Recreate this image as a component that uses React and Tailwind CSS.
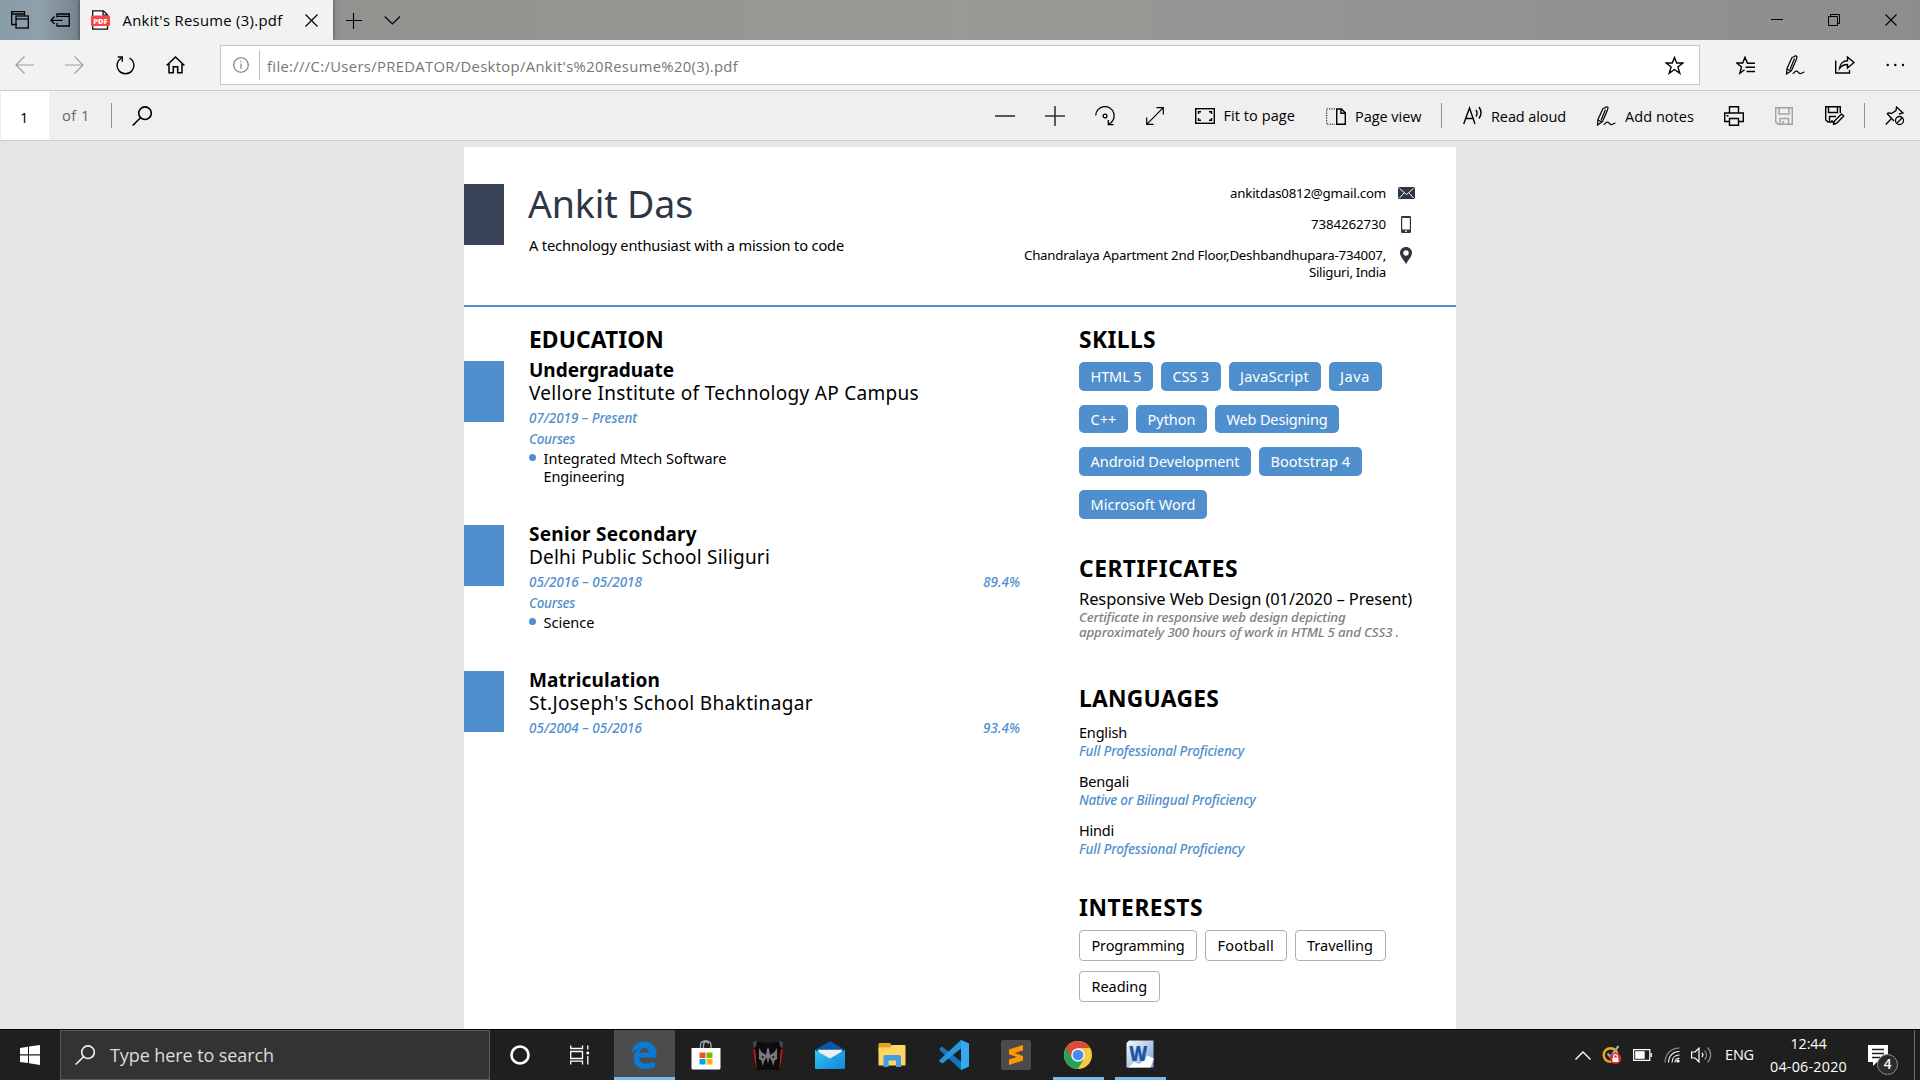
import { useLayoutEffect, useRef } from "react";

/* Single line of text tracked so that it fills exactly `w` pixels. */
function Fit({ w, className = "", children }) {
  const ref = useRef(null);
  useLayoutEffect(() => {
    const el = ref.current;
    el.style.letterSpacing = "0px";
    const natural = el.getBoundingClientRect().width;
    el.style.letterSpacing = (w - natural) / el.textContent.length + "px";
  }, [w, children]);
  return (
    <span className={`block w-fit shrink-0 whitespace-pre ${className}`}>
      <span ref={ref} className="inline-block">{children}</span>
    </span>
  );
}

function Ico({ w = 20, h = 20, sw = 1.3, className = "", children }) {
  return (
    <svg
      width={w}
      height={h}
      viewBox={`0 0 ${w} ${h}`}
      fill="none"
      stroke="currentColor"
      strokeWidth={sw}
      className={`block shrink-0 ${className}`}
    >
      {children}
    </svg>
  );
}

const PenIcon = ({ className }) => (
  <Ico className={className} sw={1.2}>
    <path d="M8.500 2 L10.500 0.800 L12 1.500 L11.500 4 L6.500 15.500 L1.500 19 L2 13.500 L7 2.500 Z M9.500 3.500 L5 14.500 M2 14 L5.500 16" />
    <path d="M7.500 18.500 C9.500 18.500 9.500 15.500 12 16.200 C14 17 13.500 19 16 18.500 C17.500 18 18 17 19.500 17" />
  </Ico>
);

const MagnifierIcon = ({ className }) => (
  <Ico className={className} sw={1.6}>
    <circle cx="13" cy="7.200" r="6.300" />
    <path d="M8.500 11.700 L0.700 19.500" />
  </Ico>
);

function TitleBar() {
  return (
    <div className="flex h-10 items-center bg-linear-to-r from-[#8e8e8c] via-[#999996] to-[#8d8d8d] text-black">
      <div className="flex h-10 w-20 items-center bg-linear-to-r from-[#8a9ba8] via-[#8fa0ab] to-[#76838d]">
        <Ico w={18} h={18} className="ml-[11px]">
          <path d="M5.500 13.500 H0.700 V0.700 H13.500 V4.500 M0.700 3 H13.500" />
          <rect x="5" y="5" width="12.300" height="12" />
          <path d="M5 8 H17.300" />
        </Ico>
        <Ico w={20} h={14} className="ml-[21px]">
          <path d="M7 4.500 V1 H19.300 V13 H7 V10 M7 3.300 H19.300" />
          <path d="M12.500 7.300 H1 M4.500 3.500 L0.900 7.300 L4.500 11" />
        </Ico>
      </div>
      <div className="flex h-10 w-[253px] items-center bg-[#f2f2f2] shadow-[0_0_4px_rgba(0,0,0,0.55)]">
        <Ico w={19} h={20} className="ml-[11px]">
          <path d="M1.700 7 V0.800 H12.500 L16.500 4.800 V19.200 H1.700 V16 M12 1 V5.200 H16.500" fill="#fff" stroke="#111" />
          <rect x="0" y="5.500" width="19" height="10.500" rx="1" fill="#fb4447" stroke="none" />
          <text x="9.500" y="13.500" textAnchor="middle" fontSize="7.500" fontWeight="800" fontFamily="Open Sans" fill="#fff" stroke="none">PDF</text>
        </Ico>
        <Fit w={160} className="ml-[12.500px] text-[14.8px] leading-5">Ankit's Resume (3).pdf</Fit>
        <Ico w={13} h={13} className="ml-[22.500px]" sw={1.2}>
          <path d="M0.500 0.500 L12.500 12.500 M12.500 0.500 L0.500 12.500" />
        </Ico>
      </div>
      <Ico w={16} h={16} className="mt-[2px] ml-[13px]" sw={1.1}>
        <path d="M0 7.500 H16 M7.500 0 V16" />
      </Ico>
      <Ico w={17} h={9} className="ml-[22px]" sw={1.2}>
        <path d="M0.700 0.500 L8.400 8 L16 0.500" />
      </Ico>
      <Ico w={12} h={12} className="ml-auto" sw={1}>
        <path d="M0 5.500 H12" />
      </Ico>
      <Ico w={12} h={12} className="ml-[45px]" sw={1}>
        <path d="M0.500 2.500 H9.500 V11.500 H0.500 Z M2.500 2.500 V0.500 H11.500 V9.500 H9.500" />
      </Ico>
      <Ico w={12} h={12} className="mr-[23px] ml-[45px]" sw={1.1}>
        <path d="M0.500 0.500 L11.500 11.500 M11.500 0.500 L0.500 11.500" />
      </Ico>
    </div>
  );
}

function AddressRow() {
  return (
    <div className="flex h-[50px] items-center bg-[#f2f2f2] text-black">
      <Ico w={19} h={18} className="ml-[15px] text-[#a0a0a0]" sw={1.2}>
        <path d="M19 9 H1 M9.500 0.500 L1 9 L9.500 17.500" />
      </Ico>
      <Ico w={19} h={18} className="ml-[31px] text-[#a0a0a0]" sw={1.2}>
        <path d="M0 9 H18 M9.500 0.500 L18 9 L9.500 17.500" />
      </Ico>
      <Ico w={19} h={19} className="ml-[32px]" sw={1.4}>
        <path d="M13.500 2 A8.400 8.400 0 1 1 5.500 2" />
        <path d="M1.800 1 H6.300 V5.800" />
      </Ico>
      <Ico w={19} h={18} className="ml-[31px]" sw={1.5}>
        <path d="M0.600 9.500 L9.500 1 L18.400 9.500 M3 8 V16.800 H7.300 V10.800 H11.700 V16.800 H16 V8" />
      </Ico>
      <div className="ml-[35px] flex h-10 w-[1480px] items-center border border-[#c6c6c6] bg-white">
        <Ico w={16} h={16} className="ml-[12px] text-[#767676]" sw={1.1}>
          <circle cx="8" cy="8" r="7.300" />
          <path d="M8 6.500 V12 M8 4 V5.300" />
        </Ico>
        <div className="ml-[10px] h-[30px] w-px bg-[#bdbdbd]" />
        <Fit w={471} className="mt-px ml-[7px] text-[14.8px] leading-5 text-[#767676]">
          file:///C:/Users/PREDATOR/Desktop/Ankit's%20Resume%20(3).pdf
        </Fit>
        <Ico w={19} h={19} className="mr-[15px] ml-auto" sw={1.4}>
          <path d="M9.500 1.500 L11.700 7 H18 L12.900 10.900 L14.800 17.300 L9.500 13.500 L4.200 17.300 L6.100 10.900 L1 7 H7.300 Z" />
        </Ico>
      </div>
      <Ico w={19} h={19} className="ml-[36px]" sw={1.4}>
        <path d="M19 7.200 H11.500 L9 1.200 L6.700 7 H0.800 L5.500 10.900 L3.800 17.300 L8.500 13.800 M9.500 11.200 H19 M10.500 15.500 H19" />
      </Ico>
      <PenIcon className="ml-[30px]" />
      <Ico w={20} h={18} className="ml-[30px]" sw={1.4}>
        <path d="M0.700 4.500 V17 H14.500 V14" />
        <path d="M4.500 12.500 C5 8 8 4.700 12.500 4.700 V1 L19 6.500 L12.500 12 V8.500 C9 8.500 6.500 9.800 4.500 12.500 Z" />
      </Ico>
      <Ico w={19} h={4} className="ml-[31px]">
        <g fill="currentColor" stroke="none">
          <circle cx="1.700" cy="2" r="1.200" />
          <circle cx="9.300" cy="2" r="1.200" />
          <circle cx="17" cy="2" r="1.200" />
        </g>
      </Ico>
    </div>
  );
}

function PdfToolbar() {
  return (
    <div className="flex h-[51px] items-center border-y border-[#cbcbcb] bg-[#efefef] text-black">
      <div className="ml-px flex h-[49px] w-12 items-center bg-white pt-[4px] pl-[19px] text-[14.5px]">1</div>
      <Fit w={28} className="-mt-px ml-[13px] text-[14.8px] leading-5 text-[#666]">of 1</Fit>
      <div className="ml-[21px] h-[25px] w-px bg-[#8f8f8f]" />
      <MagnifierIcon className="ml-[20px]" />
      <Ico className="ml-[843px] text-[#333]" sw={1.6}>
        <path d="M0 10 H20" />
      </Ico>
      <Ico className="ml-[30px] text-[#333]" sw={1.6}>
        <path d="M0 10 H20 M10 0 V20" />
      </Ico>
      <Ico className="ml-[30px]" sw={1.3}>
        <path d="M0.700 9.500 A9.200 9.200 0 1 1 14 18 M13.300 14 V18.700 H18.500" />
        <circle cx="10" cy="10" r="1.900" />
      </Ico>
      <Ico w={18} h={18} className="ml-[31px]" sw={1.2}>
        <path d="M0.700 17.300 L17.300 0.700 M10.500 0.700 H17.300 V7.500 M0.700 10.500 V17.300 H7.500" />
      </Ico>
      <Ico w={20} h={16} className="ml-[31px]" sw={1.4}>
        <rect x="0.700" y="0.700" width="18.600" height="14.600" />
        <path d="M3.500 6 V3.700 H6 M14 3.700 H16.500 V6 M3.500 10 V12.300 H6 M14 12.300 H16.500 V10" />
      </Ico>
      <Fit w={71.500} className="ml-[8.500px] text-[14.500px] leading-5">Fit to page</Fit>
      <Ico w={20} h={17} className="mt-[2px] ml-[31px]" sw={1.400}>
        <path d="M10.700 1 H15.500 L19.300 4.800 V16.300 H10.700 Z M15 1 V5.300 H19.300" />
        <path d="M9 0.900 H0.700 V16.200 H9" strokeDasharray="1.200 1.200" strokeWidth="1" />
      </Ico>
      <Fit w={66.500} className="mt-[2px] ml-[9px] text-[14.500px] leading-5">Page view</Fit>
      <div className="ml-[19.500px] h-[25px] w-px bg-[#8f8f8f]" />
      <Ico w={20} h={19} className="ml-[21px]" sw={1.4}>
        <path d="M0.700 18 L6.500 2 L12 18 M2.800 12.500 H10" />
        <path d="M13 4 A6 6 0 0 1 13 10.500 M16 1 A10 10 0 0 1 16 12.500" />
      </Ico>
      <Fit w={75} className="mt-[2px] ml-[8px] text-[14.500px] leading-5">Read aloud</Fit>
      <PenIcon className="ml-[30px]" />
      <Fit w={69} className="mt-[2px] ml-[9px] text-[14.500px] leading-5">Add notes</Fit>
      <Ico className="ml-[30px]" sw={1.4}>
        <path d="M5.500 7 V0.700 H14.500 V7 M5 15.500 H0.700 V7 H19.300 V15.500 H15" />
        <path d="M5.500 12.500 H14.500 V19.300 H5.500 Z M2.500 9.700 H4.500" />
      </Ico>
      <Ico w={18} h={18} className="ml-[31px] text-[#a3a3a3]" sw={1.5}>
        <path d="M0.700 0.700 H17.300 V17.300 H3 L0.700 15 Z M4 0.700 V7 H14 V0.700 M5 17 V11.500 H13.500 V17 M8 17 V14" />
      </Ico>
      <Ico w={20} h={19} className="ml-[32px]" sw={1.4}>
        <path d="M9 16 H3 L0.700 14 V0.700 H15.300 V7 M3.500 0.700 V6.500 H12.500 V0.700 M4.500 16 V10.500 H11" />
        <path d="M8.500 18.500 L9.500 15 L16.500 8 L18.700 10 L11.800 17.200 Z M7 14 V16" />
      </Ico>
      <div className="ml-[19px] h-[25px] w-px bg-[#8f8f8f]" />
      <Ico className="ml-[20px]" sw={1.3}>
        <path d="M0.700 18.500 L6 13 M2 7.500 C4 6.500 6.500 7.500 6.500 7.500 L11 4.500 L11.500 1 L18 7 L14 8 M2 7.500 L9 15" />
        <circle cx="14.500" cy="14.500" r="4" />
        <path d="M12 17 L17 12" />
      </Ico>
    </div>
  );
}

function Heading({ w, className = "", children }) {
  return <Fit w={w} className={`text-[22.800px] leading-[30px] font-bold text-black ${className}`}>{children}</Fit>;
}

function Contact({ w, children }) {
  return <Fit w={w} className="text-[13.3px] leading-[16.5px]">{children}</Fit>;
}

function ResumeHeader() {
  return (
    <div className="flex h-[160px] border-b-2 border-[#508fcd]">
      <div className="mt-[37px] h-[61px] w-10 bg-[#384357]" />
      <div className="ml-6 pt-[34px]">
        <Fit w={165} className="text-[37.500px] leading-[46px] text-[#2d3644]">Ankit Das</Fit>
        <Fit w={315} className="mt-[7.500px] ml-px text-[14.600px] leading-5">A technology enthusiast with a mission to code</Fit>
      </div>
      <div className="ml-auto flex flex-col items-end pt-[37.500px]">
        <Contact w={156}>ankitdas0812@gmail.com</Contact>
        <div className="h-[14.800px]" />
        <Contact w={75}>7384262730</Contact>
        <div className="h-[14.800px]" />
        <Contact w={362}>Chandralaya Apartment 2nd Floor,Deshbandhupara-734007,</Contact>
        <Contact w={77}>Siliguri, India</Contact>
      </div>
      <div className="mr-[41px] ml-[11px] flex w-[18px] flex-col items-center pt-[40px] text-[#2d3644]">
        <Ico w={17} h={12}>
          <rect width="17" height="12" rx="1.500" fill="currentColor" stroke="none" />
          <path d="M1.500 1.500 L8.500 7.500 L15.500 1.500 M1.500 11 L6 6 M15.500 11 L11 6" stroke="#fff" strokeWidth="1" />
        </Ico>
        <Ico w={10} h={17} className="mt-[17px]">
          <rect width="10" height="17" rx="1.200" fill="currentColor" stroke="none" />
          <rect x="1.200" y="2" width="7.600" height="11.500" fill="#fff" stroke="none" />
          <circle cx="5" cy="15.200" r="0.900" fill="#fff" stroke="none" />
        </Ico>
        <Ico w={12} h={17} className="mt-[14px]">
          <path d="M6 0 C9.400 0 12 2.600 12 5.900 C12 9.500 8.500 12.500 6 17 C3.500 12.500 0 9.500 0 5.900 C0 2.600 2.600 0 6 0 Z M6 3.300 A2.700 2.700 0 1 0 6 8.700 A2.700 2.700 0 1 0 6 3.300 Z" fill="currentColor" fillRule="evenodd" stroke="none" />
        </Ico>
      </div>
    </div>
  );
}

function Entry({ className, title, school, date, grade, courses }) {
  return (
    <div className={`flex ${className}`}>
      <div className="h-[61px] w-10 bg-[#508fcd]" />
      <div className="ml-[25px] w-[491px]">
        <Fit w={title[1]} className="text-[19px] leading-[18px] font-bold">{title[0]}</Fit>
        <Fit w={school[1]} className="mt-[3px] text-[19px] leading-[23px]">{school[0]}</Fit>
        <div className="mt-[2.500px] flex justify-between text-[13.500px] leading-5 font-medium text-[#508fcd] italic">
          <Fit w={date[1]}>{date[0]}</Fit>
          {grade && <Fit w={37}>{grade}</Fit>}
        </div>
        {courses && (
          <>
            <Fit w={46} className="mt-px text-[13.500px] leading-5 font-medium text-[#508fcd] italic">Courses</Fit>
            <div className="flex">
              <div className="mt-[5px] h-[7px] w-[7px] rounded-full bg-[#508fcd]" />
              <div className="ml-[7.500px] text-[14.500px] leading-[18px]">
                {courses.map(([t, w]) => <Fit key={t} w={w}>{t}</Fit>)}
              </div>
            </div>
          </>
        )}
      </div>
    </div>
  );
}

const SKILLS = [
  [["HTML 5", 51], ["CSS 3", 36.5], ["JavaScript", 69], ["Java", 30]],
  [["C++", 26], ["Python", 48], ["Web Designing", 101]],
  [["Android Development", 149], ["Bootstrap 4", 79.5]],
  [["Microsoft Word", 105]],
];

const LANGUAGES = [
  [["English", 48], ["Full Professional Proficiency", 165]],
  [["Bengali", 50], ["Native or Bilingual Proficiency", 176.5]],
  [["Hindi", 35], ["Full Professional Proficiency", 165]],
];

const INTERESTS = [
  [["Programming", 93], ["Football", 56.5], ["Travelling", 66]],
  [["Reading", 55.5]],
];

function Resume() {
  return (
    <div className="h-[882px] w-[992px] overflow-hidden bg-white font-['Noto_Sans',sans-serif] text-black">
      <ResumeHeader />
      <div className="flex">
        <div className="w-[615px] pt-[18px]">
          <Heading w={135} className="ml-[65px]">EDUCATION</Heading>
          <div className="mt-[6px]">
            <Entry
              className="h-[164px]"
              title={["Undergraduate", 145]}
              school={["Vellore Institute of Technology AP Campus", 390]}
              date={["07/2019 – Present", 108]}
              courses={[["Integrated Mtech Software", 183], ["Engineering", 81]]}
            />
            <Entry
              className="h-[146px]"
              title={["Senior Secondary", 168]}
              school={["Delhi Public School Siliguri", 241]}
              date={["05/2016 – 05/2018", 113]}
              grade="89.4%"
              courses={[["Science", 51]]}
            />
            <Entry
              className="h-[61px]"
              title={["Matriculation", 131]}
              school={["St.Joseph's School Bhaktinagar", 284]}
              date={["05/2004 – 05/2016", 113]}
              grade="93.4%"
            />
          </div>
        </div>
        <div className="pt-[18px]">
          <Heading w={77}>SKILLS</Heading>
          <div className="mt-[7px] flex flex-col gap-[14.200px]">
            {SKILLS.map((row, i) => (
              <div key={i} className="flex gap-2">
                {row.map(([t, w]) => (
                  <div key={t} className="h-[28.500px] rounded-[5px] bg-[#508fcd] px-[11.500px]">
                    <Fit w={w} className="text-[14.500px] leading-[28.500px] text-white">{t}</Fit>
                  </div>
                ))}
              </div>
            ))}
          </div>
          <Heading w={159} className="mt-[35.400px]">CERTIFICATES</Heading>
          <Fit w={333} className="mt-[4.500px] text-[16.500px] leading-[22px]">Responsive Web Design (01/2020 – Present)</Fit>
          <div className="text-[13.300px] leading-[15px] font-medium text-[#808080] italic">
            <Fit w={266.5}>Certificate in responsive web design depicting</Fit>
            <Fit w={320}>approximately 300 hours of work in HTML 5 and CSS3 .</Fit>
          </div>
          <Heading w={140} className="mt-[44px]">LANGUAGES</Heading>
          <div className="mt-[9px] flex flex-col gap-3">
            {LANGUAGES.map(([[name, nw], [level, lw]]) => (
              <div key={name} className="leading-[18px]">
                <Fit w={nw} className="text-[14.500px]">{name}</Fit>
                <Fit w={lw} className="mt-px text-[13.500px] font-medium text-[#508fcd] italic">{level}</Fit>
              </div>
            ))}
          </div>
          <Heading w={124} className="mt-[34.500px]">INTERESTS</Heading>
          <div className="mt-[7px] flex flex-col gap-[9.500px]">
            {INTERESTS.map((row, i) => (
              <div key={i} className="flex gap-2">
                {row.map(([t, w]) => (
                  <div key={t} className="h-[31.500px] rounded-[4px] border-[1.500px] border-[#b0b0b0] px-[11.500px]">
                    <Fit w={w} className="text-[14.500px] leading-[29px]">{t}</Fit>
                  </div>
                ))}
              </div>
            ))}
          </div>
        </div>
      </div>
    </div>
  );
}

function Tile({ active, running, children }) {
  return (
    <div className={`flex h-[50px] w-[61px] shrink-0 flex-col items-center ${active ? "bg-[#4c4c4c]" : ""}`}>
      <div className="flex h-[47px] items-center pt-[3px] pr-[2px]">{children}</div>
      {active && <div className="h-[3px] w-[61px] bg-[#76b9ed]" />}
      {running && <div className="h-[3px] w-[51px] bg-[#76b9ed]" />}
    </div>
  );
}

function Taskbar() {
  return (
    <div className="flex h-[51px] items-center border-t border-black bg-[#1f1f1f] text-white">
      <Ico className="ml-[20px]">
        <path d="M0 3 L8 1.800 V9.300 H0 Z M9 1.600 L20 0 V9.300 H9 Z M0 10.400 H8 V18 L0 17 Z M9 10.400 H20 V20 L9 18.300 Z" fill="#fff" stroke="none" />
      </Ico>
      <div className="ml-[20px] flex h-[50px] w-[430px] items-center border border-[#5c5c5c] bg-[#333]">
        <MagnifierIcon className="ml-[14px] text-[#eee]" />
        <Fit w={164} className="ml-[15px] text-[18px] leading-6 text-[#dcdcdc]">Type here to search</Fit>
      </div>
      <Ico className="ml-[20px]" sw={2.600}>
        <circle cx="10" cy="10" r="8.500" />
      </Ico>
      <Ico className="ml-[40px]" sw={1.300}>
        <path d="M0.700 0.500 V3.500 H12.500 V0.500 M0.700 19.500 V16.200 H12.500 V19.500 M0.700 6.500 H12.500 V13.500 H0.700 Z M17.800 0.500 V4.500 M17.800 11 V19.500" />
        <rect x="16.500" y="6.700" width="2.600" height="2.600" fill="#fff" stroke="none" />
      </Ico>
      <div className="ml-[24px] flex gap-px">
        <Tile active>
          <Ico w={26} h={28}>
            <path d="M0.300 12.500 C1.500 4.500 6.500 0.500 13 0.500 C21 0.500 25.500 6 25.500 13.500 V16.500 H8.200 C8.500 20.500 11.500 22.500 15.700 22.500 C19 22.500 21.800 21.500 24 20.200 V25.800 C21.500 27.200 18.500 28 14.500 28 C7.500 28 2.800 24 2.800 17.500 C2.800 12.800 5.200 9.600 8.800 7.600 C5 8.300 2.200 9.800 0.300 12.500 Z M8.500 11.800 H17.800 C17.800 8.800 16.500 6.800 13.500 6.800 C10.500 6.800 8.800 9.300 8.500 11.800 Z" fill="#0a7ad8" fillRule="evenodd" stroke="none" />
          </Ico>
        </Tile>
        <Tile>
          <Ico w={30} h={30} className="mb-px">
            <path d="M9.500 8 V5 C9.500 -0.500 20 -0.500 20 5 V8 M12.500 8 V5.500 C12.500 0.500 17 0.500 17.500 4" stroke="#aaa" />
            <path d="M0.500 8 H29.500 V28 Q29.500 29.500 28 29.500 H2 Q0.500 29.500 0.500 28 Z" fill="#fff" stroke="none" />
            <g stroke="none">
              <path d="M8.500 12.500 H14.500 V18 H8.500 Z" fill="#f25022" />
              <path d="M15.500 12.500 H21.500 V18 H15.500 Z" fill="#7fba00" />
              <path d="M8.500 19 H14.500 V24.500 H8.500 Z" fill="#00a4ef" />
              <path d="M15.500 19 H21.500 V24.500 H15.500 Z" fill="#ffb900" />
            </g>
          </Ico>
        </Tile>
        <Tile>
          <Ico w={30} h={30}>
            <g stroke="none">
              <path d="M0 0.500 L4 1.500 L11 2.500 H19 L26 1.500 L30 0.500 L26.500 30 H3.500 Z" fill="#0c0c0c" />
              <path d="M0 2 L4 0.500 L3 6 L0.800 9 Z M30 2 L26 0.500 L27 6 L29.200 9 Z" fill="#4a4a4c" />
              <path d="M0.200 9 L2.300 10 L3.800 29 L2 23 Z M29.800 9 L27.700 10 L26.200 29 L28 23 Z" fill="#d31118" />
              <path d="M6 8 L8.500 12 L13 15 L14 9.500 L15 7 L16 9.500 L17 15 L21.500 12 L24 8 V19 L21.500 20.500 L20.500 26 L18.500 20.500 L16.500 17.500 L15 23.500 L13.500 17.500 L11.500 20.500 L9.500 26 L8.500 20.500 L6 19 Z" fill="#7a7a7c" />
              <path d="M8.800 15.500 L11 16.800 L10 18.500 L8.800 17.800 Z M21.200 15.500 L19 16.800 L20 18.500 L21.200 17.800 Z" fill="#19191a" />
            </g>
          </Ico>
        </Tile>
        <Tile>
          <Ico w={30} h={30}>
            <defs>
              <linearGradient id="mail" x1="0" y1="0" x2="1" y2="1">
                <stop offset="0" stopColor="#35c8f5" />
                <stop offset="1" stopColor="#1583d8" />
              </linearGradient>
            </defs>
            <g stroke="none">
              <path d="M0 10 L15 1 L30 10 V20 H0 Z" fill="#0858a6" />
              <path d="M3 9.700 H27 L25 20 H5 Z" fill="#f0f0f0" />
              <path d="M0 10 L15 18.500 L30 10 V28 Q30 29 29 29 H1 Q0 29 0 28 Z" fill="url(#mail)" />
              <path d="M15 18.500 L30 10 V28 Z" fill="#1b98e4" opacity=".45" />
            </g>
          </Ico>
        </Tile>
        <Tile>
          <Ico w={28} h={24}>
            <g stroke="none">
              <path d="M0.500 1 Q0.500 0 1.500 0 H12 L14 2.500 V8 H0.500 Z" fill="#e4a11b" />
              <path d="M0.500 4.500 H12 L14 2 H26.500 Q27.500 2 27.500 3 V22.500 H0.500 Z" fill="#ffd664" />
              <path d="M5.500 24 V14 Q5.500 12 7.500 12 H21 Q23 12 23 14 V24 H18 V17.500 H10.500 V24 Z" fill="#459ee0" />
            </g>
          </Ico>
        </Tile>
        <Tile>
          <Ico w={30} h={30}>
            <g stroke="none">
              <path d="M22 0 L30 3.500 V26.500 L22 30 L1 10.500 L0.200 8.500 L3 6.500 L22 21.500 Z" fill="#1277bd" />
              <path d="M22 0 L22 8.500 L3.500 23.500 L0.200 21.500 L1 19.500 Z" fill="#2796dd" />
              <path d="M22 0 L30 3.500 V26.500 L22 30 Z" fill="#35a9ef" />
            </g>
          </Ico>
        </Tile>
        <Tile>
          <Ico w={30} h={30}>
            <rect width="30" height="30" rx="2.500" fill="#4b4b4b" stroke="none" />
            <path d="M22 5 V10.500 L13.500 13 L22 16 V20.500 L8 25 V19.500 L16 17 L8 14.300 V9.500 Z" fill="#ff9800" stroke="none" />
          </Ico>
        </Tile>
        <Tile running>
          <Ico w={28} h={28}>
            <g stroke="none">
              <circle cx="14" cy="14" r="14" fill="#fcca3f" />
              <path d="M14 14 L1.900 7 A14 14 0 0 0 14 28 L20 17.500 Z" fill="#23a455" />
              <path d="M14 7 H26.100 A14 14 0 0 0 1.900 7 L8 17.500 Z" fill="#de493a" />
              <circle cx="14" cy="14" r="6.800" fill="#f3f3f3" />
              <circle cx="14" cy="14" r="5.300" fill="#4a8af4" />
            </g>
          </Ico>
        </Tile>
        <Tile running>
          <Ico w={28} h={28} className="mb-[2px]">
            <defs>
              <linearGradient id="word" x1="0" y1="0" x2="1" y2="1">
                <stop offset="0" stopColor="#f4f8fd" />
                <stop offset="1" stopColor="#7c9fd3" />
              </linearGradient>
            </defs>
            <g stroke="none">
              <path d="M3 0.500 H27.500 V27.500 H0.500 V3 Z" fill="url(#word)" />
              <path d="M4 26 L8 22 L13 24 L19 20 L21 15.500 L28 18.500 L24.500 27.500 H2 Z" fill="#fff" />
            </g>
            <text x="3" y="20.500" fontSize="21" fontWeight="800" fontFamily="Open Sans" textLength="18.500" lengthAdjust="spacingAndGlyphs" fill="#1d56a5" stroke="none">W</text>
          </Ico>
        </Tile>
      </div>
      <Ico w={16} h={9} className="ml-auto" sw={1.400}>
        <path d="M0.500 8.500 L8 1 L15.500 8.500" />
      </Ico>
      <Ico w={20} h={20} className="ml-[11px]">
        <circle cx="8.500" cy="10" r="6.800" stroke="#f4a71d" strokeWidth="2.400" />
        <path d="M5.500 8.500 L8.500 12 L16.500 1" stroke="#a8a8a8" strokeWidth="2.200" />
        <circle cx="13.500" cy="13.500" r="5.700" fill="#d8262c" stroke="none" />
        <path d="M10.500 12.500 H16.500 V17 H10.500 Z" fill="#fff" stroke="none" />
        <path d="M11.700 12.500 V11 C11.700 9.200 15.300 9.200 15.300 11 V12.500" stroke="#fff" />
      </Ico>
      <Ico w={19} h={12} className="ml-[11px]" sw={1.200}>
        <path d="M0.600 0.600 H16.800 V11.400 H0.600 Z M18.300 4 V8" />
        <rect x="2.200" y="2.200" width="9.500" height="7.600" fill="#fff" stroke="none" />
      </Ico>
      <Ico w={16} h={16} className="ml-[12px]" sw={1.100}>
        <path d="M1 15.500 C1 7 7 1 15.500 1" stroke="#999" />
        <path d="M4.500 15.500 C4.500 9 9 4.500 15.500 4.500 M8 15.500 C8 11 11 8 15.500 8" />
        <path d="M11 15.500 C11 13 13 11.300 15.500 11.300" />
        <circle cx="14" cy="14" r="1.600" fill="#fff" stroke="none" />
      </Ico>
      <Ico w={21} h={18} className="ml-[11px]" sw={1.200}>
        <path d="M0.600 6 H4 L8 2.200 V15.800 L4 12 H0.600 Z M11 7 A3 3 0 0 1 11 11" />
        <path d="M13.500 4.500 A6 6 0 0 1 13.500 13.500 M16.500 1.500 A10.500 10.500 0 0 1 16.500 16.500" stroke="#8a8a8a" />
      </Ico>
      <Fit w={29} className="ml-[13px] text-[14.500px] leading-5">ENG</Fit>
      <div className="ml-[16px] flex w-[77px] flex-col items-center text-[14.300px] leading-[23px]">
        <Fit w={36}>12:44</Fit>
        <Fit w={77}>04-06-2020</Fit>
      </div>
      <div className="relative mr-[17px] ml-[21px] h-[36px] w-[29px] pt-[8px]">
        <Ico w={20} h={21}>
          <path d="M0 0 H20 V17 H9 L5 21 V17 H0 Z" fill="#fff" stroke="none" />
          <path d="M4 4.500 H16 M4 8.500 H16 M4 12.500 H12" stroke="#1f1f1f" />
        </Ico>
        <div className="absolute top-[17px] left-[9px] flex h-[21px] w-[21px] items-center justify-center rounded-full border border-[#8f8f8f] bg-[#2b2b2b] text-[13.500px] font-semibold">
          4
        </div>
      </div>
      <div className="mr-[5px] h-[50px] w-px bg-[#6b6b6b]" />
    </div>
  );
}

export default function App() {
  return (
    <div className="flex h-[1080px] w-[1920px] flex-col overflow-hidden bg-[#e6e6e6] font-['Open_Sans',sans-serif]">
      <TitleBar />
      <AddressRow />
      <PdfToolbar />
      <div className="flex h-[888px] justify-center pt-[6px]">
        <Resume />
      </div>
      <Taskbar />
    </div>
  );
}
